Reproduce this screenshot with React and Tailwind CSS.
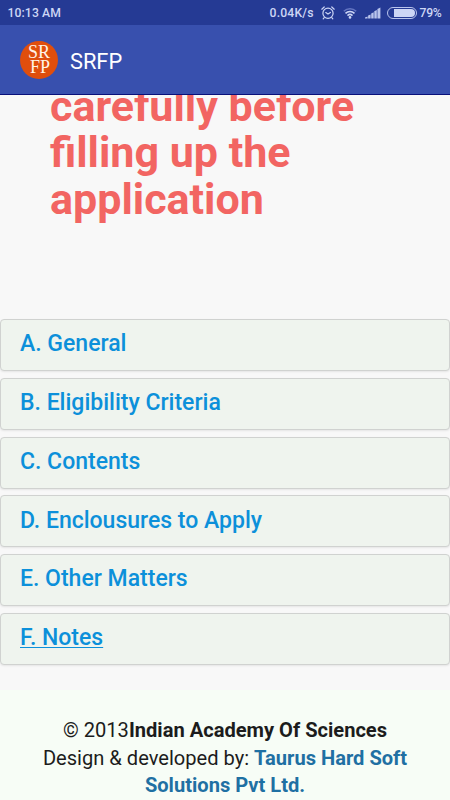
import React from "react";

const sections = [
  { label: "A. General" },
  { label: "B. Eligibility Criteria" },
  { label: "C. Contents" },
  { label: "D. Enclousures to Apply" },
  { label: "E. Other Matters" },
  { label: "F. Notes", active: true },
];

function AlarmIcon() {
  return (
    <svg width="14" height="14" viewBox="0 0 14 14" fill="none" stroke="#cdd6f5" strokeWidth="1.2" strokeLinecap="round">
      <circle cx="7" cy="7.2" r="5.1" />
      <path d="M4.8 6.6 7 8l2.4-1.5M.8 3.2 3.2 1M13.2 3.2 10.8 1M3.2 11.6l-1 1.2M10.8 11.6l1 1.2" />
    </svg>
  );
}

function WifiIcon() {
  return (
    <svg width="14" height="12" viewBox="0 0 14 12" fill="none" strokeWidth="1.5">
      <path d="M.8 4.2a9 9 0 0 1 12.4 0" stroke="#6576c2" />
      <path d="M2.5 6.4a6.4 6.4 0 0 1 9 0" stroke="#cdd6f5" />
      <path d="M4.5 8.6a3.6 3.6 0 0 1 5 0" stroke="#cdd6f5" />
      <circle cx="7" cy="10.4" r="1.3" fill="#cdd6f5" />
    </svg>
  );
}

function SignalIcon() {
  return (
    <svg width="16" height="12" viewBox="0 0 16 12" fill="#b9c4ec">
      <path d="M0 11.5V10.5L2.6 9.4v2.1zM3.1 11.5V8.6l2.5-1v3.9zM6.2 11.5V6.5l2.5-1.2v6.2zM9.3 11.5V4.3l2.5-1.4v8.6zM12.4 11.5V2L15.4.5v11z" />
    </svg>
  );
}

function StatusBar() {
  return (
    <div className="flex h-[25px] shrink-0 items-center bg-[#253a94] pt-px pl-[7.5px] text-[12.2px] font-medium text-[#cdd6f5]">
      <span className="w-[262px] tracking-[0.1px]">10:13 AM</span>
      <span className="w-[51px] tracking-[0.2px]">0.04K/s</span>
      <span className="w-[22px] pb-px"><AlarmIcon /></span>
      <span className="w-[22px] pb-px"><WifiIcon /></span>
      <span className="w-[22px] pb-px"><SignalIcon /></span>
      <span className="mr-[3px] mb-px flex h-[12px] w-[30px] items-center justify-end rounded-full border border-[#b9c4ec] p-px">
        <span className="h-[8px] w-[21px] rounded-r-full bg-[#cdd6f5]" />
      </span>
      <span className="tracking-[-0.3px]">79%</span>
    </div>
  );
}

function AppBar() {
  return (
    <header className="flex h-[70px] shrink-0 items-center border-b border-[#08107a] bg-[#3850ae] pl-5">
      <div className="flex size-[38px] flex-col items-center justify-center rounded-full bg-[#e04e0c] font-['Liberation_Serif',serif] text-[18px] leading-[14.5px] text-[#fff3e6]">
        <span>SR</span>
        <span className="pl-[2px]">FP</span>
      </div>
      <h1 className="ml-3 pt-[5px] text-[21.8px] text-white">SRFP</h1>
    </header>
  );
}

function App() {
  return (
    <div className="flex h-[800px] w-[450px] flex-col overflow-hidden bg-[#f8f8f8] font-['Roboto',sans-serif]">
      <StatusBar />
      <AppBar />

      <div className="flex h-[224px] shrink-0 flex-col overflow-hidden pl-[50px]">
        <h2 className="-mt-[12px] text-[43px] leading-[46.4px] font-bold text-[#f26562]">
          carefully before
          <br />
          filling up the
          <br />
          application
        </h2>
      </div>

      <div className="flex h-[371px] shrink-0 flex-col gap-[6.8px]">
        {sections.map((item) => (
          <div key={item.label} className="h-[52px] shrink-0 rounded border border-[#d0d2d0] bg-[#eff4ee] pt-[9.2px] pl-[19px] text-[23px] leading-[29px] font-medium text-[#0c90da] shadow-[0_1px_2px_rgba(0,0,0,0.08)]">
            <span className={item.active ? "underline decoration-1 underline-offset-[2px]" : ""}>{item.label}</span>
          </div>
        ))}
      </div>

      <footer className="grow bg-[#f7fdf6] pt-[27px] text-center text-[20.1px] leading-[27.5px] text-[#1c1c1c]">
        <p>© 2013<b className="font-bold">Indian Academy Of Sciences</b></p>
        <p>Design &amp; developed by: <b className="font-bold text-[#1f70a3]">Taurus Hard Soft</b></p>
        <p><b className="font-bold text-[#1f70a3]">Solutions Pvt Ltd.</b></p>
      </footer>
    </div>
  );
}

export default App;
